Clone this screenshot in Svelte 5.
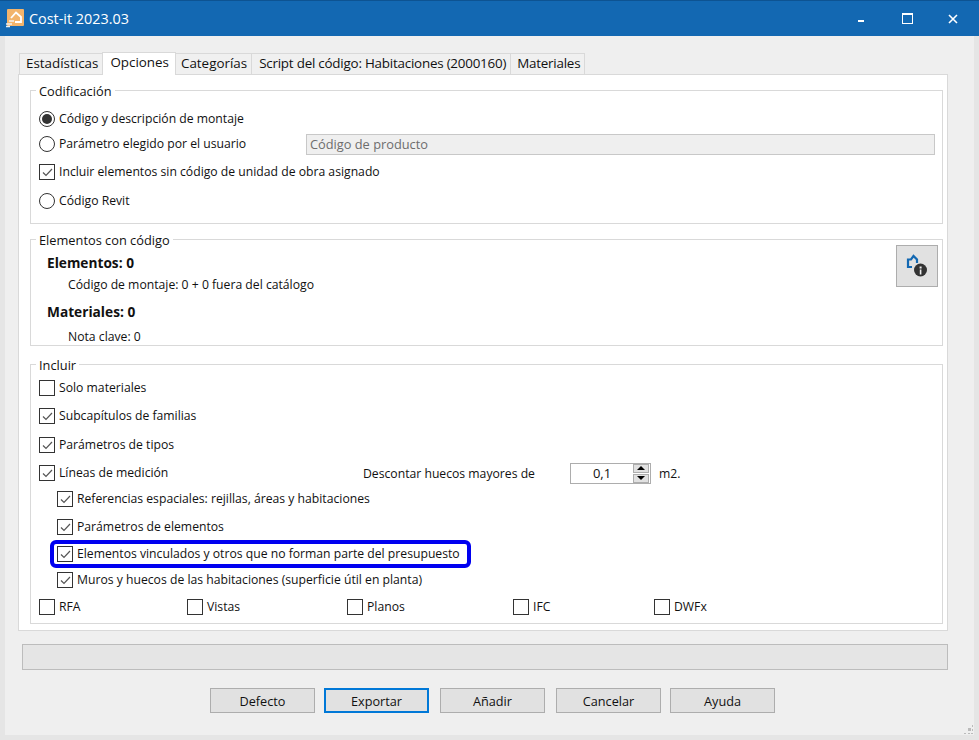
<script>
  const tabs = ['Estadísticas', 'Opciones', 'Categorías', 'Script del código: Habitaciones (2000160)', 'Materiales'];
  const buttons = ['Defecto', 'Exportar', 'Añadir', 'Cancelar', 'Ayuda'];
  const formats = ['RFA', 'Vistas', 'Planos', 'IFC', 'DWFx'];
</script>

{#snippet check(label, checked = false)}
  <label class="opt">
    <span class="box">
      {#if checked}
        <svg width="11" height="9" viewBox="0 0 11 9"><path d="M1 4.5 L4 7.5 L10 1" fill="none" stroke="#555" stroke-width="1.2" /></svg>
      {/if}
    </span>
    {label}
  </label>
{/snippet}

{#snippet radio(label, checked = false)}
  <label class="opt">
    <span class="radio" class:on={checked}></span>
    {label}
  </label>
{/snippet}

<div class="window">
  <header class="titlebar">
    <svg class="appicon" width="20" height="20" viewBox="0 0 20 20">
      <rect x="2" y="0" width="17" height="17" rx="1" fill="#f2b46c" />
      <path d="M6 9 L11 3.5 L16 8 V13 H10" fill="none" stroke="#fff" stroke-width="1.8" />
      <path d="M1 15 H7 M1 17.5 H5 M4 12 H9" stroke="#f0f0f0" stroke-width="1.6" />
    </svg>
    <span class="title">Cost-it 2023.03</span>
    <div class="controls">
      <span class="ctl"><i class="min"></i></span>
      <span class="ctl"><i class="max"></i></span>
      <span class="ctl">
        <svg width="10" height="10" viewBox="0 0 10 10"><path d="M1 1 L9 9 M9 1 L1 9" stroke="#fff" stroke-width="1.6" /></svg>
      </span>
    </div>
  </header>

  <main class="content">
    <nav class="tabs">
      {#each tabs as tab, i}
        <span class="tab" class:active={i === 1}>{tab}</span>
      {/each}
    </nav>

    <section class="panel">
      <div class="group codif">
        <span class="legend">Codificación</span>
        <div class="rows">
          {@render radio('Código y descripción de montaje', true)}
          <div class="param">
            {@render radio('Parámetro elegido por el usuario')}
            <div class="field">Código de producto</div>
          </div>
          {@render check('Incluir elementos sin código de unidad de obra asignado', true)}
          {@render radio('Código Revit')}
        </div>
      </div>

      <div class="group elems">
        <span class="legend">Elementos con código</span>
        <div class="summary">
          <div class="stats">
            <b>Elementos: 0</b>
            <p>Código de montaje: 0 + 0 fuera del catálogo</p>
            <b class="second">Materiales: 0</b>
            <p class="last">Nota clave: 0</p>
          </div>
          <button class="info" aria-label="Información">
            <svg width="24" height="24" viewBox="0 0 24 24">
              <path d="M7 13 H3 V5.5 H6 L8.5 2 L12 5.5 V9" fill="none" stroke="#1368b2" stroke-width="2.2" />
              <circle cx="15.5" cy="16" r="6.5" fill="#333" />
              <rect x="14.6" y="12.5" width="2" height="2" fill="#eee" />
              <rect x="14.8" y="15.5" width="1.6" height="5" fill="#eee" />
            </svg>
          </button>
        </div>
      </div>

      <div class="group incl">
        <span class="legend">Incluir</span>
        <div class="rows">
          {@render check('Solo materiales')}
          {@render check('Subcapítulos de familias', true)}
          {@render check('Parámetros de tipos', true)}
          <div class="lines">
            {@render check('Líneas de medición', true)}
            <span class="huecos">Descontar huecos mayores de</span>
            <div class="spin">
              <span class="num">0,1</span>
              <span class="arrows"><i class="up"></i><i class="down"></i></span>
            </div>
            <span class="unit">m2.</span>
          </div>
          <div class="sub">{@render check('Referencias espaciales: rejillas, áreas y habitaciones', true)}</div>
          <div class="sub">{@render check('Parámetros de elementos', true)}</div>
          <div class="sub"><div class="mark">{@render check('Elementos vinculados y otros que no forman parte del presupuesto', true)}</div></div>
          <div class="sub">{@render check('Muros y huecos de las habitaciones (superficie útil en planta)', true)}</div>
          <div class="formats">
            {#each formats as f}
              {@render check(f)}
            {/each}
          </div>
        </div>
      </div>
    </section>

    <div class="progress"></div>

    <footer class="actions">
      {#each buttons as b, i}
        <button class="btn" class:primary={i === 1}>{b}</button>
      {/each}
    </footer>

    <svg class="grip" width="10" height="10" viewBox="0 0 10 10">
      <path d="M8 0h1v2h-1z M4 3h3v3h-3z M8 4h1v2h-1z M0 8h2v1h-2z M4 8h2v1h-2z M7 8h2v1h-2z" fill="#bbb" />
    </svg>
  </main>
</div>

<style>
  :global(body) {
    margin: 0;
    background: #e5e5e5;
    font-family: "Open Sans", sans-serif;
    font-size: 12.2px;
    color: #111;
  }

  .window {
    width: 979px;
    height: 740px;
    display: flex;
    flex-direction: column;
    overflow: hidden;
  }

  .titlebar {
    height: 35px;
    flex: none;
    background: #1368b2;
    border-top: 1px solid #0d5392;
    display: flex;
    align-items: center;
    color: #fff;
    padding-left: 5px;
  }

  .appicon { margin-right: 4px; }

  .title { font-size: 14.4px; }

  .controls {
    margin-left: auto;
    display: flex;
    padding-right: 3px;
  }

  .ctl {
    width: 46px;
    height: 30px;
    display: flex;
    align-items: center;
    justify-content: center;
  }

  .min { width: 6px; height: 2px; background: #fff; margin-top: 4px; }
  .max { width: 9px; height: 8px; border: 1px solid #fff; border-top-width: 2px; }

  .content {
    position: relative;
    width: 969px;
    height: 699px;
    margin-left: 5px;
    background: #efefef;
    padding: 16px 0 0 13px;
    box-sizing: border-box;
  }

  .tabs {
    display: flex;
    height: 22px;
    align-items: flex-end;
    padding-left: 2px;
  }

  .tab {
    height: 20px;
    line-height: 19px;
    padding: 0 4px 0 5px;
    background: #f0f0f0;
    border: 1px solid #d9d9d9;
    border-bottom: 0;
    margin-left: -1px;
    font-size: 13.4px;
    box-sizing: content-box;
  }

  .tab:first-child { padding-left: 6px; }
  .tab:nth-child(n+4) { letter-spacing: -0.22px; }
  .tab:nth-child(4) { padding-left: 7px; }
  .tab:nth-child(5) { padding-left: 6px; }

  .tab.active {
    height: 22px;
    line-height: 19px;
    background: #fff;
    position: relative;
    z-index: 1;
    margin-bottom: -1px;
    padding: 0 6px 0 7px;
  }

  .panel {
    width: 930px;
    height: 557px;
    background: #fff;
    border: 1px solid #d9d9d9;
    padding: 15px 5px 0 11px;
    box-sizing: border-box;
    display: flex;
    flex-direction: column;
  }

  .group {
    width: 913px;
    border: 1px solid #d9d9d9;
    box-sizing: border-box;
    flex: none;
  }

  .legend {
    display: block;
    width: fit-content;
    background: #fff;
    margin: -7px 0 2px 5px;
    padding: 0 3px;
    line-height: 14px;
    height: 14px;
    font-size: 12.8px;
  }

  .codif { height: 134px; }
  .elems { height: 107px; margin-top: 15px; }
  .incl { height: 260px; margin-top: 18px; }

  .rows { display: grid; padding-left: 8px; align-items: center; }

  .codif .rows {
    margin-top: 9px;
    grid-template-rows: 24px 26px 30px 28px;
  }

  .incl .rows {
    margin-top: 0;
    grid-template-rows: 28px 28px 30px 26px 26px 30px 24px 28px 26px;
  }

  .opt {
    display: flex;
    align-items: center;
    gap: 4px;
    white-space: nowrap;
    line-height: 16px;
  }

  .box {
    width: 14px;
    height: 14px;
    border: 1px solid #333;
    background: #fff;
    display: flex;
    align-items: center;
    justify-content: center;
    flex: none;
  }

  .radio {
    width: 14px;
    height: 14px;
    border: 1px solid #333;
    border-radius: 50%;
    background: #fff;
    position: relative;
    flex: none;
  }

  .radio.on::after {
    content: "";
    position: absolute;
    inset: 2px;
    border-radius: 50%;
    background: #333;
  }

  .param { display: flex; align-items: center; }
  .param .opt { width: 267px; }

  .field {
    width: 629px;
    height: 21px;
    background: #efefef;
    border: 1px solid #c8c8c8;
    color: #6d6d6d;
    line-height: 18px;
    padding-left: 3px;
    box-sizing: border-box;
    font-size: 12.8px;
  }

  .summary {
    display: flex;
    justify-content: space-between;
    align-items: flex-start;
    margin-top: -4px;
    padding: 0 4px 0 16px;
  }

  .stats b {
    display: block;
    font-size: 13.7px;
    line-height: 18px;
    margin-top: 9px;
    font-weight: 700;
  }

  .stats b.second { margin-top: 9px; }

  .stats p {
    margin: 4px 0 0 21px;
    line-height: 18px;
  }

  .stats p.last { margin-top: 7px; }

  .info {
    width: 42px;
    height: 42px;
    padding: 0;
    background: #e1e1e1;
    border: 1px solid #adadad;
    display: flex;
    align-items: center;
    justify-content: center;
  }

  .lines { display: flex; align-items: center; }
  .lines .opt { width: 324px; }
  .huecos { width: 207px; }

  .spin {
    width: 81px;
    height: 21px;
    border: 1px solid #adadad;
    background: #fff;
    box-sizing: border-box;
    display: flex;
    align-items: center;
  }

  .num { flex: 1; text-align: center; font-size: 13px; }

  .arrows {
    width: 16px;
    height: 19px;
    margin-right: 1px;
    display: flex;
    flex-direction: column;
    gap: 1px;
  }

  .arrows i {
    flex: 1;
    background: #e1e1e1;
    border: 1px solid #adadad;
    display: flex;
    align-items: center;
    justify-content: center;
  }

  .arrows i::after {
    content: "";
    border-left: 4px solid transparent;
    border-right: 4px solid transparent;
  }

  .up::after { border-bottom: 4px solid #000; }
  .down::after { border-top: 4px solid #000; }

  .unit { margin-left: 8px; }

  .sub { padding-left: 18px; }

  .mark {
    width: fit-content;
    outline: 4px solid #0000f0;
    border-radius: 2px;
    padding: 2px 7px 2px 3px;
    margin-left: -3px;
  }

  .formats { display: grid; grid-template-columns: 148px 160px 166px 141px auto; }

  .progress {
    width: 926px;
    height: 26px;
    margin: 13px 0 0 4px;
    background: #e5e5e5;
    border: 1px solid #bcbcbc;
    box-sizing: border-box;
  }

  .actions {
    display: flex;
    margin: 18px 0 0 192px;
  }

  .btn {
    width: 105px;
    height: 25px;
    padding: 0;
    font: inherit;
    color: inherit;
    background: #e1e1e1;
    border: 1px solid #adadad;
    font-size: 12.7px;
    margin-right: 11px;
  }

  .btn.primary { border: 2px solid #0078d7; margin-left: -2px; }
  .btn:nth-child(4) { margin-right: 9px; }

  .grip { position: absolute; right: 0; bottom: 0; }
</style>
